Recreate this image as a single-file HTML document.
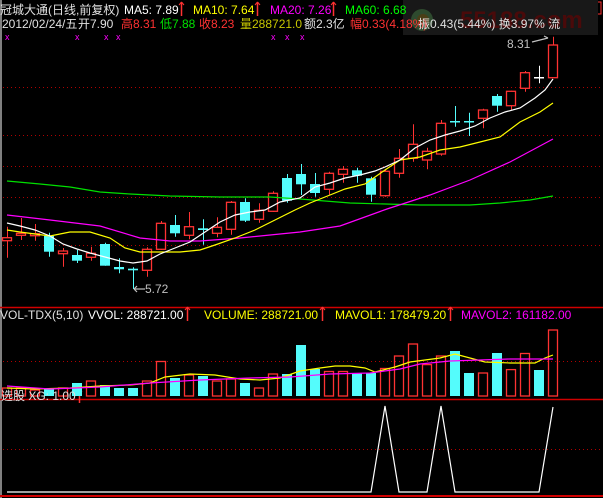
<!DOCTYPE html><html><head><meta charset="utf-8"><style>
body{margin:0;background:#000;width:603px;height:498px;overflow:hidden;position:relative;font-family:"Liberation Sans","Noto Sans CJK SC",sans-serif;font-size:12px}
.t{position:absolute;white-space:nowrap;line-height:14px}
svg{position:absolute;left:0;top:0}
</style></head><body>
<svg id="s" width="603" height="498"></svg>
<div style="position:absolute;left:403px;top:0;width:195px;height:35px;background:#181818"></div>
<div class="t" style="left:460px;top:8px;color:#4a0a0a;font-size:24px;font-weight:bold;line-height:26px">55188.com</div>
<div style="position:absolute;left:411px;top:9px;width:22px;height:22px;border-radius:50%;background:#2e4a2e"></div>
<div style="position:absolute;left:417px;top:14px;width:12px;height:12px;border-radius:50%;background:#4a3e16"></div>
<div class="t" style="left:0;top:3px;color:#e0e0e0">冠城大通(日线,前复权)</div>
<div class="t" style="left:124px;top:3px;color:#fff">MA5: 7.89</div>
<div class="t" style="left:193px;top:3px;color:#ffff00">MA10: 7.64</div>
<div class="t" style="left:270px;top:3px;color:#ff00ff">MA20: 7.26</div>
<div class="t" style="left:345px;top:3px;color:#00ff00">MA60: 6.68</div>
<div class="t" style="left:2px;top:17px;color:#e0e0e0">2012/02/24/五</div>
<div class="t" style="left:78px;top:17px;color:#e0e0e0">开7.90</div>
<div class="t" style="left:121px;top:17px;color:#ff3232">高8.31</div>
<div class="t" style="left:160px;top:17px;color:#00e000">低7.88</div>
<div class="t" style="left:199px;top:17px;color:#ff3232">收8.23</div>
<div class="t" style="left:240px;top:17px;color:#c8c800">量288721.0</div>
<div class="t" style="left:304px;top:17px;color:#e0e0e0">额2.3亿</div>
<div class="t" style="left:350px;top:17px;color:#ff3232">幅0.33(4.18%)</div>
<div class="t" style="left:418px;top:17px;color:#e0e0e0">振0.43(5.44%) 换3.97% 流</div>
<div class="t" style="left:507px;top:37px;color:#c0c0c0">8.31</div>
<div class="t" style="left:145px;top:282px;color:#c0c0c0">5.72</div>
<div class="t" style="left:0;top:308px;color:#e0e0e0">VOL-TDX(5,10)</div>
<div class="t" style="left:88px;top:308px;color:#fff">VVOL: 288721.00</div>
<div class="t" style="left:204px;top:308px;color:#ffff00">VOLUME: 288721.00</div>
<div class="t" style="left:335px;top:308px;color:#ffff00">MAVOL1: 178479.20</div>
<div class="t" style="left:461px;top:308px;color:#ff00ff">MAVOL2: 161182.00</div>
<div class="t" style="left:1px;top:389px;color:#e0e0e0">选股 XG: 1.00</div>
<script>
var s=document.getElementById('s'),h='';
function L(x1,y1,x2,y2,c,w,d){h+='<line x1="'+x1+'" y1="'+y1+'" x2="'+x2+'" y2="'+y2+'" stroke="'+c+'" stroke-width="'+(w||1)+'"'+(d?' stroke-dasharray="1 3"':'')+'/>';}
function P(pts,c){h+='<polyline fill="none" stroke="'+c+'" stroke-width="1.2" points="'+pts+'"/>';}
L(1,0,1,498,'#808080',2);
[87,135,166,197,245,361,449].forEach(function(y){L(3,y+.5,603,y+.5,'#b00000',1,1)});
L(0,307.5,603,307.5,'#d00000',1.5);L(0,399.5,603,399.5,'#d00000',1.5);L(0,496,603,496,'#d00000',2);
[181,257,333,408,187,322,450,79].forEach(function(x,i){var y=i<4?2:(i<7?307:389);L(x+.5,y,x+.5,y+14,'#ff3232',1.5);L(x-2,y+3,x+.5,y,'#ff3232');L(x+3,y+3,x+.5,y,'#ff3232');});
[8,78,107,119,274,288,303].forEach(function(x){h+='<text x="'+(x-3)+'" y="40" fill="#ff00ff" font-size="9">x</text>'});
h+='<rect x="576" y="4" width="7" height="7" transform="rotate(45 579.5 7.5)" fill="none" stroke="#ff3232"/>';
h+='<rect x="589" y="2" width="12" height="12" fill="none" stroke="#ff3232"/><line x1="595" y1="2" x2="595" y2="14" stroke="#ff3232"/>';
var C=[[0,237.7,240.7,226.7,257.7],[0,233.3,235.3,218,240],[0,233.7,235.7,224,240.7],[1,236,251.7,232.7,256.7],[0,251,253.7,248,266.7],[1,255,260.7,250,263],[0,253.3,257.3,246.7,260.7],[1,244,265.7,242.7,265.7],[1,267,269.3,258.3,273.3],[1,268.7,270.3,267.3,289],[0,249.3,270.3,247.3,276.7],[0,223.3,249.3,221,250],[1,225,233.3,215,236.7],[0,226.7,235.3,212,239.3],[1,228.3,230,219.3,244.7],[0,227.3,233.3,217.3,237.3],[0,202.3,229.3,201,234.7],[1,202,220.7,198.3,222],[0,210.3,219.3,203.3,222.7],[0,193.3,211.3,191.3,212],[1,178,200.7,174,202.7],[1,174,184.3,164,195],[1,184,193,173,196.7],[0,173.3,189.3,171.7,194.7],[0,169.3,174.3,166,182.7],[1,170.3,175.7,167.7,182.7],[1,178.3,194.7,176.7,201.7],[0,171.3,195.7,170,196.7],[0,158.3,173.3,149,177.7],[0,144.3,158.3,124.3,161.7],[0,151.3,160,147.7,169.3],[0,123.3,154,120,155.7],[1,121,122,106,126.7],[1,121,122,112.7,136],[0,110,118.3,108.7,128.3],[1,96,105.7,94,111.7],[0,91.3,105.7,90.7,110],[0,72.7,88.3,71,91.7],[2,77,78.5,65.7,83.3],[0,45,77.7,36.7,77.7]];
var V=[388,388,390,389,388,383,381,385,388,388,381,361.5,378,375,376,381,379,383,388,374,374,345,369,371.5,371.5,373,373,368.5,356,344,364.6,356,351,373,373,353,369.6,353.5,370,330];
var vc=[0,0,0,1,0,1,0,1,1,1,0,0,1,0,1,0,0,1,0,0,1,1,1,0,0,1,1,0,0,0,0,0,1,1,0,1,0,0,1,0];
for(var i=0;i<40;i++){var x=2+i*14,cx=x+5,c=C[i];
var col=c[0]==0?'#ff3232':(c[0]==1?'#54fcfc':'#fff');
L(cx+.5,c[3],cx+.5,c[4],col);
if(c[0]==0)h+='<rect x="'+(x+.5)+'" y="'+c[1]+'" width="9" height="'+(c[2]-c[1])+'" fill="#000" stroke="'+col+'" stroke-width="1.3"/>';
else h+='<rect x="'+x+'" y="'+c[1]+'" width="10" height="'+Math.max(1.5,c[2]-c[1])+'" fill="'+col+'"/>';
if(vc[i])h+='<rect x="'+x+'" y="'+V[i]+'" width="10" height="'+(396-V[i])+'" fill="#54fcfc"/>';
else h+='<rect x="'+(x+.5)+'" y="'+V[i]+'" width="9" height="'+(396-V[i])+'" fill="none" stroke="#ff3232" stroke-width="1.3"/>';}
P('7,181 40,184 70,187 100,192 130,194 170,196 220,197 270,197 300,199 350,203 420,205 470,205 500,203 530,200 553,196','#00e000');
P('7,215 50,220 100,226 140,238 170,241 200,241 240,238 280,234 300,232 340,226 387,209 430,195 470,180 510,162 553,139','#ff00ff');
P('7,230 20,232 35,234 50,236 70,232 90,232 110,238 125,248 140,252 160,252 180,252 200,250 215,245 235,238 255,230 275,220 295,210 310,203 330,195 345,189 365,184 385,170 400,160 420,157 440,150 460,147 480,142 500,137 520,122 540,112 553,103','#ffff00');
P('7,223 20,226 35,230 50,236 63,244 77,249 90,253 105,257 120,261 133,263 147,261 160,254 175,248 190,242 205,232 220,222 235,215 250,212 265,210 280,202 300,198 315,187 330,183 345,178 360,175 375,171 385,167 400,160 415,148 430,140 445,135 460,131 475,126 490,118 505,112 520,108 535,98 545,90 553,79','#fff');
P('7,388 35,389 70,388 100,386 130,385 150,383 165,377 190,374 215,375 240,379 260,380 280,378 300,371 320,368 335,366 350,366 365,368 375,372 395,367 410,362 425,360 440,358 455,354 470,358 485,362 510,363 535,363 545,358 553,355','#ffff00');
P('7,386 50,389 100,387 150,383 200,380 250,378 290,377 330,374 370,373 400,369 420,364 450,361 480,360 510,359 540,359 553,359','#ff00ff');
P('7,492 371,492 385,406 399,492 427,492 441,406 455,492 539,492 553,407','#fff');
P('134,289 145,289','#c0c0c0');P('134,289 137,286','#c0c0c0');P('134,289 137,292','#c0c0c0');
P('532,42 548,38','#c0c0c0');P('548,38 544,36','#c0c0c0');
s.innerHTML=h;
</script>
</body></html>
